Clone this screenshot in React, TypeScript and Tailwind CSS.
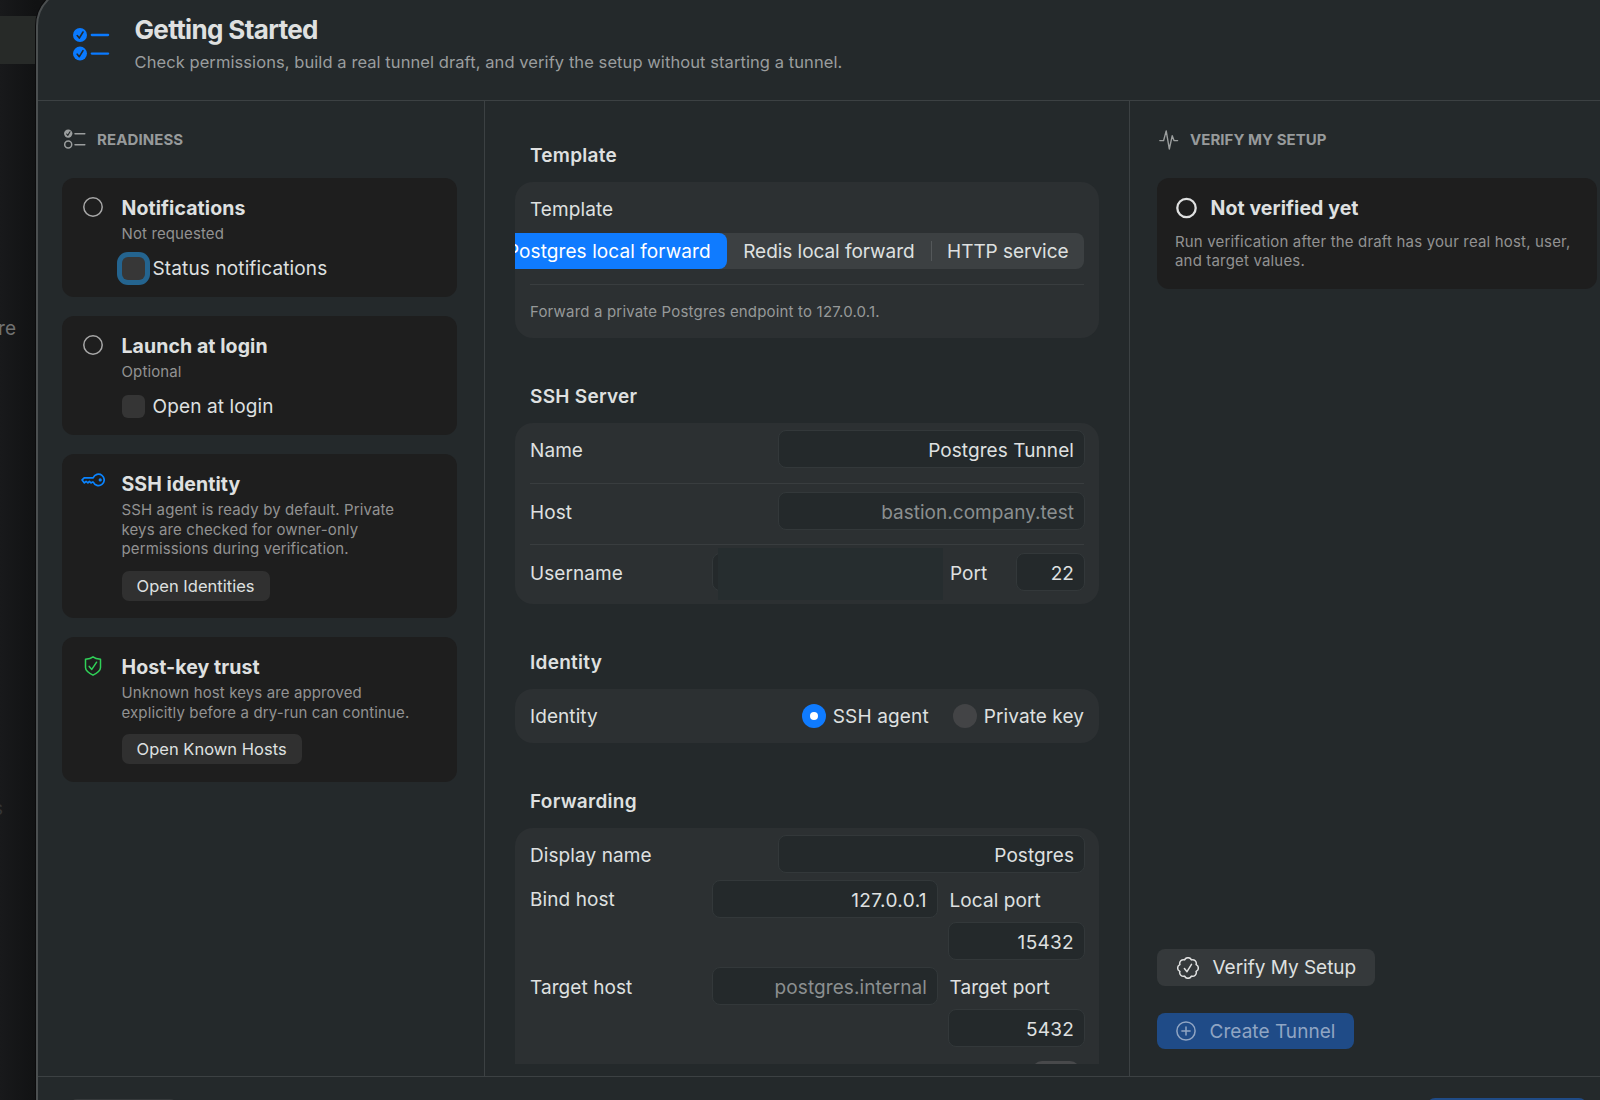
import type { ReactNode } from "react";

interface CardProps {
  icon: ReactNode;
  title: string;
  lines: string[];
  children: ReactNode;
}

interface FieldProps {
  value?: string;
  placeholder?: string;
  className: string;
}

const CircleIcon = () => (
  <svg width="24" height="24" viewBox="0 0 24 24" fill="none" stroke="#a8a8a8" strokeWidth="1.5">
    <circle cx="12" cy="12" r="9.2" />
  </svg>
);

const KeyIcon = () => (
  <svg width="24" height="24" viewBox="0 0 24 24" fill="none" stroke="#0a84ff" strokeWidth="1.7" strokeLinejoin="round">
    <path d="M12.2 9.8 H3.2 L1.1 11.9 L3.4 14.9 L5.1 13.4 L6.9 14.9 L8.4 13.4 L10 14.9 L11.6 14 H12.2 A5.7 5.7 0 1 0 12.2 9.8 Z" />
    <circle cx="19.2" cy="11.9" r="1.6" fill="#0a84ff" stroke="none" />
  </svg>
);

const ShieldIcon = () => (
  <svg width="24" height="24" viewBox="0 0 24 24" fill="none" stroke="#30d158" strokeWidth="1.5" strokeLinecap="round" strokeLinejoin="round">
    <path d="M12 2.8 C10 4.4 7.2 5 4.5 5.3 V13.6 C4.5 17 8 19.2 12 21.2 C16 19.2 19.5 17 19.5 13.6 V5.3 C16.8 5 14 4.4 12 2.8 Z" />
    <path d="M8.2 12.4 L10.8 15.4 L15.6 8.2" />
  </svg>
);

const ChecklistIcon = () => (
  <svg width="38" height="34" viewBox="0 0 38 34" fill="none" strokeLinecap="round" strokeLinejoin="round">
    {[7, 25.6].map((y) => (
      <g key={y}>
        <circle cx="7" cy={y} r="7" fill="#0a7aff" />
        <path d={`M4.2 ${y + 0.6} L6.3 ${y + 3.1} L10 ${y - 3}`} stroke="#24292b" strokeWidth="1.6" />
        <path d={`M18.8 ${y} H35.1`} stroke="#0a7aff" strokeWidth="2.3" />
      </g>
    ))}
  </svg>
);

const ReadinessIcon = () => (
  <svg width="22" height="20" viewBox="0 0 22 20" fill="none" strokeLinecap="round" strokeLinejoin="round">
    <circle cx="4.2" cy="4.6" r="4.2" fill="#9b9e9e" />
    <path d="M2.6 5 L3.8 6.4 L6 2.8" stroke="#24292b" strokeWidth="1.1" />
    <circle cx="4.2" cy="15.6" r="3.5" stroke="#9b9e9e" strokeWidth="1.5" />
    <path d="M11 4.8 H20.8 M11 15.8 H20.8" stroke="#9b9e9e" strokeWidth="1.5" />
  </svg>
);

const PulseIcon = () => (
  <svg width="20" height="20" viewBox="0 0 20 20" fill="none" stroke="#9b9e9e" strokeWidth="1.4" strokeLinecap="round" strokeLinejoin="round">
    <path d="M0.8 10.6 H4.6 L7.2 0.9 L10.3 19 L13.2 5.8 L15 10.6 H18.6" />
  </svg>
);

const SealIcon = () => (
  <svg width="22" height="22" viewBox="0 0 22 22" fill="none" stroke="#dfe0e0" strokeWidth="1.5" strokeLinecap="round" strokeLinejoin="round">
    <path d="M19.1 14.4 A3.7 3.7 0 0 1 14.4 19.1 A3.7 3.7 0 0 1 7.6 19.1 A3.7 3.7 0 0 1 2.9 14.4 A3.7 3.7 0 0 1 2.9 7.6 A3.7 3.7 0 0 1 7.6 2.9 A3.7 3.7 0 0 1 14.4 2.9 A3.7 3.7 0 0 1 19.1 7.6 A3.7 3.7 0 0 1 19.1 14.4 Z" />
    <path d="M7.4 11.5 L10 14.7 L14.5 7.4" />
  </svg>
);

const PlusCircleIcon = () => (
  <svg width="20" height="20" viewBox="0 0 20 20" fill="none" stroke="#90a5c3" strokeWidth="1.5" strokeLinecap="round">
    <circle cx="10" cy="10" r="9.1" />
    <path d="M10 5.9 V14.1 M5.9 10 H14.1" />
  </svg>
);

function ReadinessCard({ icon, title, lines, children }: CardProps) {
  return (
    <div className="flex gap-[16.5px] rounded-[12px] bg-[#1e1e1e] pt-[18px] pb-[17.5px] pl-[19px]">
      <div className="h-6 w-6 shrink-0 -translate-y-px">{icon}</div>
      <div>
        <h3 className="text-[19.5px] leading-6 font-bold tracking-[0.08px]">{title}</h3>
        <div className="mt-[4.5px] text-[15px] leading-[19.5px] tracking-[0.12px] text-[#929292]">
          {lines.map((line) => (
            <p key={line} className="whitespace-nowrap">{line}</p>
          ))}
        </div>
        {children}
      </div>
    </div>
  );
}

function Checkbox({ label, focused }: { label: string; focused?: boolean }) {
  return (
    <label className="mt-[13px] flex h-[23px] items-center gap-2">
      <span
        className={
          focused
            ? "h-[23px] w-[23px] rounded-[6px] bg-[#373737] ring-[5px] ring-[#24648f]"
            : "h-[23px] w-[23px] rounded-[6px] bg-[#353535]"
        }
      />
      <span className="pt-[2px] text-[19px] leading-6 tracking-[0.13px]">{label}</span>
    </label>
  );
}

function SmallButton({ children }: { children: ReactNode }) {
  return (
    <button
      type="button"
      className="mt-[12px] block h-[30px] rounded-[7px] bg-[#303030] px-[15px] text-[16.5px] leading-[30px] tracking-[0.02px]"
    >
      {children}
    </button>
  );
}

function Field({ value, placeholder, className }: FieldProps) {
  return (
    <div
      className={`flex h-[38px] shrink-0 items-center justify-end rounded-[8px] border border-[#33383a] bg-[#24292b] pt-[3px] pr-[10px] text-[19px] leading-6 ${className}`}
    >
      {value ?? <span className="text-[#8b8f90]">{placeholder}</span>}
    </div>
  );
}

function SectionTitle({ children }: { children: ReactNode }) {
  return <h2 className="mb-[14px] pl-[15px] text-[19px] leading-6 font-semibold tracking-[0.27px]">{children}</h2>;
}

export default function App() {
  return (
    <div className="relative h-[1100px] w-[1600px] overflow-hidden bg-[#161718] font-['Inter',sans-serif] text-[#dfe0e0]">
      {/* Main window behind the sheet */}
      <div className="flex h-full w-[60px] flex-col bg-linear-to-r from-[#18191b] to-[#111213] to-60% pt-4">
        <div className="h-12 bg-[#272a28]" />
        <div className="mt-[253px] flex w-[16px] justify-end text-[19px] leading-6 text-[#707171]">re</div>
        <div className="mt-[456px] flex w-[3px] justify-end text-[19px] leading-6 text-[#343536]">s</div>
      </div>

      {/* Sheet */}
      <div className="absolute top-[-12px] left-[36px] flex h-[1200px] w-[1620px] flex-col overflow-hidden rounded-tl-[38px] border-2 border-[#4b4f50] bg-[#24292b] shadow-[0_0_0_1px_#0b0b0c]">
        <header className="flex h-[111px] shrink-0 border-b border-[#3c4143] pt-[23.5px] pl-[35px]">
          <div className="mt-[14.5px] w-[61.5px]">
            <ChecklistIcon />
          </div>
          <div>
            <h1 className="text-[26px] leading-8 font-bold tracking-[-0.64px]">Getting Started</h1>
            <p className="mt-[6px] text-[16.5px] leading-5 tracking-[0.075px] text-[#9a9d9e]">
              Check permissions, build a real tunnel draft, and verify the setup without starting a tunnel.
            </p>
          </div>
        </header>

        <div className="flex h-[975px] shrink-0">
          {/* Readiness */}
          <section className="w-[447px] shrink-0 border-r border-[#3c4143] pt-[28px] pr-[27.5px] pl-[24px]">
            <div className="mb-[28.5px] flex h-5 items-center gap-[11px] pl-[2px]">
              <ReadinessIcon />
              <span className="pt-px text-[15px] leading-5 font-bold tracking-[0.1px] text-[#979a9b]">READINESS</span>
            </div>
            <div className="flex flex-col gap-[18.5px]">
              <ReadinessCard icon={<CircleIcon />} title="Notifications" lines={["Not requested"]}>
                <Checkbox label="Status notifications" focused />
              </ReadinessCard>
              <ReadinessCard icon={<CircleIcon />} title="Launch at login" lines={["Optional"]}>
                <Checkbox label="Open at login" />
              </ReadinessCard>
              <ReadinessCard
                icon={<div className="-translate-y-[3px]"><KeyIcon /></div>}
                title="SSH identity"
                lines={[
                  "SSH agent is ready by default. Private",
                  "keys are checked for owner-only",
                  "permissions during verification.",
                ]}
              >
                <SmallButton>Open Identities</SmallButton>
              </ReadinessCard>
              <ReadinessCard
                icon={<ShieldIcon />}
                title="Host-key trust"
                lines={["Unknown host keys are approved", "explicitly before a dry-run can continue."]}
              >
                <SmallButton>Open Known Hosts</SmallButton>
              </ReadinessCard>
            </div>
          </section>

          {/* Draft form */}
          <section className="w-[645px] shrink-0 border-r border-[#3c4143] pl-[30px]">
            <div className="h-[963px] w-[584px] overflow-hidden pt-[43px] text-[19px] leading-6 tracking-[0.08px]">
              <SectionTitle>Template</SectionTitle>
              <div className="mb-[47px] h-[156px] overflow-hidden rounded-[18px] bg-[#2c3032] px-[15px] pt-[16px]">
                <p>Template</p>
                <div className="mt-[11px] flex h-9 justify-end">
                  <div className="flex shrink-0 items-center rounded-[8px] bg-[#3c4042] whitespace-nowrap">
                    <span className="flex h-9 items-center rounded-[8px] bg-[#0f7bff] px-4 pt-[2px] text-white">
                      Postgres local forward
                    </span>
                    <span className="pt-[2px] pr-4 pl-[16.5px] tracking-[-0.04px]">Redis local forward</span>
                    <span className="h-5 w-px bg-[#54585a]" />
                    <span className="px-[15.5px] pt-[2px] tracking-[-0.04px]">HTTP service</span>
                  </div>
                </div>
                <div className="mt-[15px] h-px bg-[#393d3f]" />
                <p className="mt-[17px] text-[15px] leading-[19.5px] tracking-[0.18px] text-[#969999]">
                  Forward a private Postgres endpoint to 127.0.0.1.
                </p>
              </div>

              <SectionTitle>SSH Server</SectionTitle>
              <div className="mb-[47px] h-[181px] rounded-[18px] bg-[#2c3032] pt-[7px] pr-[14px] pl-[15px]">
                <div className="flex items-center justify-between">
                  <span className="pt-[3px]">Name</span>
                  <Field value="Postgres Tunnel" className="w-[307px]" />
                </div>
                <div className="mt-[15px] mr-px mb-[8px] h-px bg-[#393d3f]" />
                <div className="flex items-center justify-between">
                  <span className="pt-[3px]">Host</span>
                  <Field placeholder="bastion.company.test" className="w-[307px] tracking-[0.02px]" />
                </div>
                <div className="mt-[14px] mr-px mb-[8px] h-px bg-[#393d3f]" />
                <div className="flex items-center">
                  <span className="w-[182px] pt-[3px]">Username</span>
                  <div className="relative w-[238px] shrink-0">
                    <Field className="w-[226px]" />
                    <div className="absolute top-[-5px] left-[6px] h-[52px] w-[225px] bg-[#262d2f]" />
                  </div>
                  <span className="grow pt-[3px]">Port</span>
                  <Field value="22" className="w-[69px]" />
                </div>
              </div>

              <SectionTitle>Identity</SectionTitle>
              <div className="mb-[47px] flex h-[54px] items-center rounded-[18px] bg-[#2c3032] pr-[15px] pl-[15px]">
                <span className="grow pt-[2px]">Identity</span>
                <span className="mr-[7px] flex h-6 w-6 items-center justify-center rounded-full bg-[#0f7bff]">
                  <span className="h-2 w-2 rounded-full bg-white" />
                </span>
                <span className="pt-[2px] tracking-[0.15px]">SSH agent</span>
                <span className="mr-[7px] ml-6 h-6 w-6 rounded-full bg-[#434446]" />
                <span className="pt-[2px]">Private key</span>
              </div>

              <SectionTitle>Forwarding</SectionTitle>
              <div className="flex h-[400px] flex-col gap-[7px] rounded-[18px] bg-[#2c3032] pt-[7px] pr-[14px] pl-[15px]">
                <div className="flex items-center justify-between">
                  <span className="pt-[3px]">Display name</span>
                  <Field value="Postgres" className="w-[307px]" />
                </div>
                <div className="flex">
                  <span className="w-[182px] pt-[1.5px] leading-[36.5px]">Bind host</span>
                  <Field value="127.0.0.1" className="w-[226px] tracking-[0.4px]" />
                  <div className="ml-[10px] flex flex-col gap-1">
                    <span className="h-[38px] pt-[1.5px] pl-[1.5px] leading-[38px]">Local port</span>
                    <Field value="15432" className="w-[137px] tracking-[0.3px]" />
                  </div>
                </div>
                <div className="flex">
                  <span className="w-[182px] pt-[1.5px] leading-[38px]">Target host</span>
                  <Field placeholder="postgres.internal" className="w-[226px]" />
                  <div className="ml-[10px] flex flex-col gap-1">
                    <span className="h-[38px] pt-[1.5px] pl-[1.5px] leading-[38px]">Target port</span>
                    <Field value="5432" className="w-[137px] tracking-[0.2px]" />
                  </div>
                </div>
                <div className="mt-[7px] mr-[5px] h-6 w-[48px] self-end rounded-[10px] bg-[#48494b]" />
              </div>
            </div>
          </section>

          {/* Verification */}
          <section className="flex w-[470px] shrink-0 flex-col items-start pt-[29px] pl-[27px]">
            <div className="flex h-5 items-center gap-[11px] pl-[2px]">
              <PulseIcon />
              <span className="text-[15px] leading-5 font-bold tracking-[0.05px] text-[#979a9b]">VERIFY MY SETUP</span>
            </div>
            <div className="mt-[28px] h-[111px] w-[440px] rounded-[12px] bg-[#1e1e1e] pt-[18px] pl-[18px]">
              <div className="flex items-center gap-[13.5px]">
                <svg width="22" height="22" viewBox="0 0 22 22" fill="none" stroke="#dfe0e0" strokeWidth="2.3">
                  <circle cx="11.5" cy="11" r="9.2" />
                </svg>
                <h3 className="text-[19.5px] leading-6 font-bold tracking-[0.08px]">Not verified yet</h3>
              </div>
              <div className="mt-[11.5px] text-[15px] leading-[19.5px] tracking-[0.17px] text-[#929292]">
                <p className="whitespace-nowrap">Run verification after the draft has your real host, user,</p>
                <p>and target values.</p>
              </div>
            </div>
            <button
              type="button"
              className="mt-auto mb-[27px] flex h-[37px] items-center gap-[13.5px] rounded-[8px] bg-[#35393b] pr-[19px] pl-[20px] text-[19px] tracking-[-0.02px]"
            >
              <SealIcon />
              <span className="pt-[2px]">Verify My Setup</span>
            </button>
            <button
              type="button"
              className="mb-[27px] flex h-9 items-center gap-[13.5px] rounded-[8px] bg-[#1f4b87] pr-[19px] pl-[19px] text-[19px] tracking-[0.05px] text-[#90a5c3]"
            >
              <PlusCircleIcon />
              <span className="pt-[2px]">Create Tunnel</span>
            </button>
          </section>
        </div>

        <footer className="flex h-20 shrink-0 items-start justify-between border-t border-[#3c4143] pr-[33px] pl-[31px]">
          <div className="mt-[22px] h-9 w-[109px] rounded-[8px] bg-[#35393b]" />
          <div className="mt-[21px] mr-[34px] h-9 w-[160px] rounded-[8px] bg-[#1f4b87]" />
        </footer>
      </div>
    </div>
  );
}
